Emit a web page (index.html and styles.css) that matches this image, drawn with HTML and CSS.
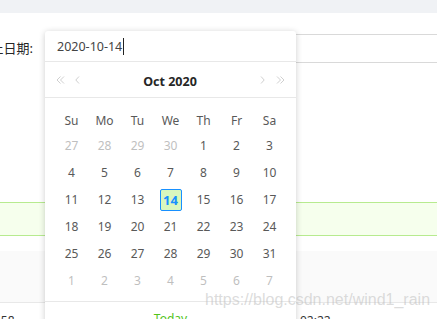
FILE: index.html
```html
<!DOCTYPE html>
<html>
<head>
<meta charset="utf-8">
<link rel="stylesheet" href="styles.css">
</head>
<body>
<div class="topbar"></div>
<div class="page">
  <div class="form-row">
    <label class="label">止日期:</label>
    <div class="input"></div>
  </div>
  <div class="alert"></div>
  <div class="thead"></div>
  <div class="trow"><span class="c1">558</span><span class="c2">02:22</span></div>
</div>

<div class="picker">
  <div class="p-input">2020-10-14<span class="caret"></span></div>
  <div class="p-header">
    <svg class="nav dbl" width="9" height="8" viewBox="0 0 9 8"><path d="M4.5 0.5 L1 4 L4.5 7.5 M8 0.5 L4.5 4 L8 7.5"/></svg>
    <svg class="nav sgl" width="5" height="8" viewBox="0 0 5 8"><path d="M4 0.5 L0.8 4 L4 7.5"/></svg>
    <span class="title">Oct 2020</span>
    <svg class="nav sgl" width="5" height="8" viewBox="0 0 5 8"><path d="M1 0.5 L4.2 4 L1 7.5"/></svg>
    <svg class="nav dbl" width="9" height="8" viewBox="0 0 9 8"><path d="M1 0.5 L4.5 4 L1 7.5 M4.5 0.5 L8 4 L4.5 7.5"/></svg>
  </div>
  <div class="p-body">
    <div class="grid wd"><span>Su</span><span>Mo</span><span>Tu</span><span>We</span><span>Th</span><span>Fr</span><span>Sa</span></div>
    <div class="grid days">
      <span class="off">27</span><span class="off">28</span><span class="off">29</span><span class="off">30</span><span>1</span><span>2</span><span>3</span>
      <span>4</span><span>5</span><span>6</span><span>7</span><span>8</span><span>9</span><span>10</span>
      <span>11</span><span>12</span><span>13</span><span class="sel"><b>14</b></span><span>15</span><span>16</span><span>17</span>
      <span>18</span><span>19</span><span>20</span><span>21</span><span>22</span><span>23</span><span>24</span>
      <span>25</span><span>26</span><span>27</span><span>28</span><span>29</span><span>30</span><span>31</span>
      <span class="off">1</span><span class="off">2</span><span class="off">3</span><span class="off">4</span><span class="off">5</span><span class="off">6</span><span class="off">7</span>
    </div>
  </div>
  <div class="p-footer">Today</div>
</div>

<div class="watermark">https://blog.csdn.net/wind1_rain</div>
</body>
</html>
```

FILE: styles.css
```css
html, body {
  margin: 0;
  padding: 0;
  overflow: hidden;
  background: #fff;
  font-family: "Noto Sans", "Noto Sans CJK SC", sans-serif;
  font-size: 12px;
  color: #595959;
}
.topbar {
  height: 13px;
  background: #f0f2f5;
}
.page {
  display: flex;
  flex-direction: column;
}
.form-row {
  display: flex;
  align-items: center;
  margin-top: 21px;
  height: 29px;
}
.label {
  width: 35px;
  flex: none;
  font-size: 13px;
  color: #262626;
  white-space: nowrap;
  overflow: hidden;
  display: flex;
  justify-content: flex-end;
  padding-right: 2px;
  margin-right: 10px;
  box-sizing: border-box;
  margin-top: -3px;
}
.input {
  flex: 1;
  height: 29px;
  box-sizing: border-box;
  border-top: 1px solid #d9d9d9;
  border-bottom: 1px solid #d9d9d9;
}
.alert {
  margin-top: 139px;
  height: 34px;
  box-sizing: border-box;
  background: #f6ffed;
  border-top: 1px solid #b7eb8f;
  border-bottom: 1px solid #b7eb8f;
}
.thead {
  margin-top: 15px;
  height: 51px;
  background: #fafafa;
  border-bottom: 1px solid #e8e8e8;
}
.trow {
  position: relative;
  height: 30px;
  font-size: 12px;
  color: #333;
}
.trow .c1 { position: absolute; left: -6px; top: 9px; }
.trow .c2 { position: absolute; left: 300px; top: 9px; }

.picker {
  position: absolute;
  left: 45px;
  top: 31px;
  width: 251px;
  height: 300px;
  background: #fff;
  box-shadow: 0 1px 6px rgba(0,0,0,0.2);
  border-radius: 3px;
}
.p-input {
  height: 31px;
  box-sizing: border-box;
  border-bottom: 1px solid #e8e8e8;
  padding-left: 12px;
  display: flex;
  align-items: center;
  font-size: 12.5px;
  color: #444;
  padding-top: 1px;
}
.caret {
  display: inline-block;
  width: 1px;
  height: 17px;
  background: #222;
  margin-left: 1px;
}
.p-header {
  height: 36px;
  box-sizing: border-box;
  border-bottom: 1px solid #e8e8e8;
  display: flex;
  align-items: center;
  padding: 3px 11px 0 11px;
}
.nav {
  fill: none;
  stroke: #cfcfcf;
  stroke-width: 1;
  flex: none;
  margin-top: -2px;
}
.nav.dbl + .nav.sgl { margin-left: 10px; }
.nav.sgl + .nav.dbl { margin-left: 11px; }
.title {
  flex: 1;
  text-align: center;
  font-weight: 700;
  color: #262626;
  font-size: 12.5px;
}
.p-body {
  padding: 10px 10px 7px;
}
.grid {
  display: grid;
  grid-template-columns: repeat(7, 33px);
}
.grid span {
  display: flex;
  align-items: center;
  justify-content: center;
}
.wd span {
  height: 24px;
  color: #595959;
}
.days span {
  height: 27px;
}
.days .off { color: #bfbfbf; }
.days .sel b {
  width: 22px;
  height: 22px;
  box-sizing: border-box;
  border: 1px solid #1890ff;
  background: #d9f7be;
  color: #1890ff;
  display: flex;
  align-items: center;
  justify-content: center;
  border-radius: 2px;
  font-size: 13px;
}
.p-footer {
  border-top: 1px solid #e8e8e8;
  text-align: center;
  padding-top: 8px;
  color: #52c41a;
  font-size: 12px;
}
.watermark {
  position: absolute;
  left: 205px;
  top: 291px;
  font-family: "Liberation Sans", sans-serif;
  font-size: 16px;
  color: rgba(190,190,190,0.55);
  white-space: nowrap;
}
```
